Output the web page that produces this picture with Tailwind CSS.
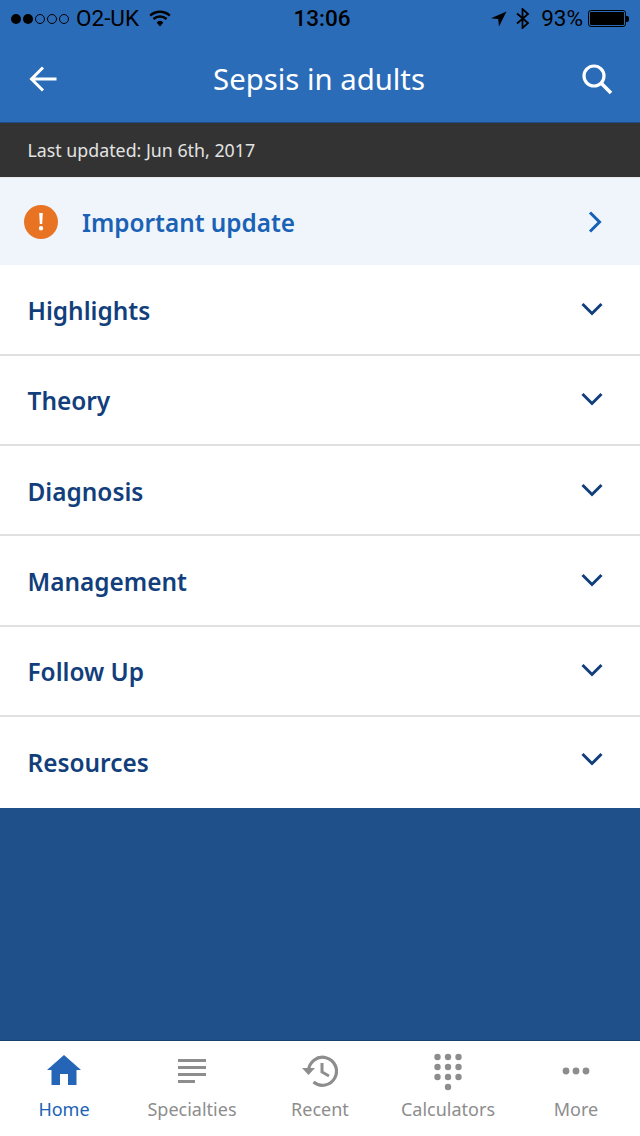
<!DOCTYPE html>
<html>
<head>
<meta charset="utf-8">
<script src="https://cdn.jsdelivr.net/npm/@tailwindcss/browser@4"></script>
</head>
<body class="m-0 bg-white font-['Noto_Sans',sans-serif]">
<div class="w-[640px] h-[1136px] flex flex-col overflow-hidden">
  <header class="h-[123px] shrink-0 bg-[#2b6cb9] border-b border-[#1e4f8a] flex flex-col">
    <div class="h-[37px] relative flex items-center justify-between px-[11px] text-black font-['Roboto',sans-serif] text-[22.500px]">
      <div class="flex items-center">
        <div class="flex items-center gap-[2px]">
          <span class="w-[10px] h-[10px] rounded-full bg-black"></span>
          <span class="w-[10px] h-[10px] rounded-full bg-black"></span>
          <span class="w-[10px] h-[10px] rounded-full border border-black"></span>
          <span class="w-[10px] h-[10px] rounded-full border border-black"></span>
          <span class="w-[10px] h-[10px] rounded-full border border-black"></span>
        </div>
        <span class="ml-[7px] leading-none">O2-UK</span>
        <svg class="ml-[10px]" width="22" height="17" viewBox="0 0 22 17"><path d="M11 16.500 7.600 12.400a5 5 0 0 1 6.800 0z" fill="#000"/><path d="M1.200 5.600a14.500 14.500 0 0 1 19.600 0M4.400 9a10 10 0 0 1 13.200 0" fill="none" stroke="#000" stroke-width="2.400"/></svg>
      </div>
      <span class="absolute left-[293.500px] top-[5px] font-medium text-[22.500px] leading-[26px]">13:06</span>
      <div class="flex items-center">
        <svg width="16" height="16" viewBox="0 0 16 16"><path d="M15.500.5 0 7.200l7.200.8.8 7.500z" fill="#000"/></svg>
        <svg class="ml-[9px]" width="14" height="21" viewBox="0 0 14 21"><path d="M1 5.500 12 15l-5.500 5V1L12 6 1 15.500" fill="none" stroke="#000" stroke-width="1.800"/></svg>
        <span class="ml-[11px] leading-none">93%</span>
        <div class="ml-[5px] flex items-center">
          <div class="w-[38px] h-[17px] rounded-[3px] border border-black p-[1px]"><div class="w-full h-full bg-black rounded-[1px]"></div></div>
          <div class="w-[3px] h-[6px] bg-black rounded-r-[2px]"></div>
        </div>
      </div>
    </div>
    <div class="flex-1 flex items-center justify-between pl-[29px] pr-[27px]">
      <svg class="-mt-[2px]" width="28" height="28" viewBox="0 0 28 28"><path d="M27.500 14H2.500M14 2.500 2.500 14 14 25.500" fill="none" stroke="#fff" stroke-width="3"/></svg>
      <h1 class="text-white text-[29.300px] leading-none font-normal">Sepsis in adults</h1>
      <svg class="-mt-[2px]" width="32" height="32" viewBox="0 0 32 32"><circle cx="13" cy="13" r="10" fill="none" stroke="#fff" stroke-width="3.200"/><path d="M20 20 30 30" stroke="#fff" stroke-width="3.600"/></svg>
    </div>
  </header>
  <div class="h-[54px] shrink-0 bg-[#333333] flex items-center pl-[27.500px] text-[#e3e3e3] text-[17.800px]">Last updated: Jun 6th, 2017</div>
  <div class="h-[88px] shrink-0 bg-[#f0f5fb] border-t border-[#e8e8e8] flex items-center pl-[24px] pr-[38px]">
    <div class="w-[34px] h-[34px] rounded-full bg-[#e87423] flex items-center justify-center">
      <svg width="6" height="18" viewBox="0 0 6 18"><path d="M1.200 0h3.600l-.6 11H1.800z M3 13a2.200 2.200 0 1 1 0 4.400A2.200 2.200 0 0 1 3 13" fill="#fff"/></svg>
    </div>
    <span class="ml-[24px] pt-[4px] flex-1 text-[#1a62b5] text-[24.300px] font-semibold">Important update</span>
    <svg width="14" height="22" viewBox="0 0 14 22"><path d="M2 1.500 11.500 11 2 20.500" fill="none" stroke="#1560b8" stroke-width="3"/></svg>
  </div>
  <div class="flex flex-col">
    <div class="h-[91px] bg-white border-b-2 border-[#e0e0e0] flex items-center justify-between pl-[27.500px] pr-[37px] pt-[3px] text-[#123f7c] text-[24.400px] font-semibold"><span>Highlights</span><svg class="-mt-[5px]" width="22" height="14" viewBox="0 0 22 14"><path d="M1.500 2 11 11.500 20.500 2" fill="none" stroke="#123f7c" stroke-width="3"/></svg></div>
    <div class="h-[90px] bg-white border-b-2 border-[#e0e0e0] flex items-center justify-between pl-[27.500px] pr-[37px] pt-[3px] text-[#123f7c] text-[24.400px] font-semibold"><span>Theory</span><svg class="-mt-[5px]" width="22" height="14" viewBox="0 0 22 14"><path d="M1.500 2 11 11.500 20.500 2" fill="none" stroke="#123f7c" stroke-width="3"/></svg></div>
    <div class="h-[90px] bg-white border-b-2 border-[#e0e0e0] flex items-center justify-between pl-[27.500px] pr-[37px] pt-[4px] text-[#123f7c] text-[24.400px] font-semibold"><span>Diagnosis</span><svg class="-mt-[5px]" width="22" height="14" viewBox="0 0 22 14"><path d="M1.500 2 11 11.500 20.500 2" fill="none" stroke="#123f7c" stroke-width="3"/></svg></div>
    <div class="h-[91px] bg-white border-b-2 border-[#e0e0e0] flex items-center justify-between pl-[27.500px] pr-[37px] pt-[3px] text-[#123f7c] text-[24.400px] font-semibold"><span>Management</span><svg class="-mt-[5px]" width="22" height="14" viewBox="0 0 22 14"><path d="M1.500 2 11 11.500 20.500 2" fill="none" stroke="#123f7c" stroke-width="3"/></svg></div>
    <div class="h-[90px] bg-white border-b-2 border-[#e0e0e0] flex items-center justify-between pl-[27.500px] pr-[37px] pt-[3px] text-[#123f7c] text-[24.400px] font-semibold"><span>Follow Up</span><svg class="-mt-[5px]" width="22" height="14" viewBox="0 0 22 14"><path d="M1.500 2 11 11.500 20.500 2" fill="none" stroke="#123f7c" stroke-width="3"/></svg></div>
    <div class="h-[91px] bg-white flex items-center justify-between pl-[27.500px] pr-[37px] pt-[1px] text-[#123f7c] text-[24.400px] font-semibold"><span>Resources</span><svg class="-mt-[9px]" width="22" height="14" viewBox="0 0 22 14"><path d="M1.500 2 11 11.500 20.500 2" fill="none" stroke="#123f7c" stroke-width="3"/></svg></div>
  </div>
  <div class="flex-1 bg-[#1f5089] border-b border-[#174070]"></div>
  <nav class="h-[95px] shrink-0 bg-white grid grid-cols-5 text-[18px] text-[#8d8d8d] w-[640px]">
    <div class="flex flex-col items-center text-[#1a62b5]">
      <div class="h-[55px] flex items-center"><svg class="mt-[3px]" width="34" height="30" viewBox="0 0 34 30"><path d="M17 0 34 15h-4.500v15H21V19h-8v11H4.500V15H0z" fill="#2465b7"/></svg></div>
      <span>Home</span>
    </div>
    <div class="flex flex-col items-center">
      <div class="h-[55px] flex items-center"><svg class="mt-[5px]" width="28" height="24" viewBox="0 0 28 24"><path d="M0 1.500h28M0 8.500h28M0 15.500h28M0 22.500h17" stroke="#8d8d8d" stroke-width="3"/></svg></div>
      <span>Specialties</span>
    </div>
    <div class="flex flex-col items-center">
      <div class="h-[55px] flex items-center"><svg class="mt-[5px]" width="36" height="32" viewBox="0 0 36 32"><path d="M6.500 16a14 14 0 1 1 5 11" fill="none" stroke="#8d8d8d" stroke-width="3.200"/><path d="M0 13h13l-6.500 7z" fill="#8d8d8d"/><path d="M20 8v9l7 4" fill="none" stroke="#8d8d8d" stroke-width="3"/></svg></div>
      <span>Recent</span>
    </div>
    <div class="flex flex-col items-center">
      <div class="h-[55px] flex items-center"><svg class="mt-[6px]" width="30" height="38" viewBox="0 0 30 38"><g fill="#8d8d8d"><circle cx="4.500" cy="4" r="3.200"/><circle cx="15" cy="4" r="3.200"/><circle cx="25.500" cy="4" r="3.200"/><circle cx="4.500" cy="14" r="3.200"/><circle cx="15" cy="14" r="3.200"/><circle cx="25.500" cy="14" r="3.200"/><circle cx="4.500" cy="24" r="3.200"/><circle cx="15" cy="24" r="3.200"/><circle cx="25.500" cy="24" r="3.200"/><circle cx="15" cy="34" r="3.200"/></g></svg></div>
      <span>Calculators</span>
    </div>
    <div class="flex flex-col items-center">
      <div class="h-[55px] flex items-center"><svg class="mt-[5px]" width="28" height="8" viewBox="0 0 28 8"><g fill="#8d8d8d"><circle cx="4" cy="4" r="3.400"/><circle cx="14" cy="4" r="3.400"/><circle cx="24" cy="4" r="3.400"/></g></svg></div>
      <span>More</span>
    </div>
  </nav>
</div>
</body>
</html>
